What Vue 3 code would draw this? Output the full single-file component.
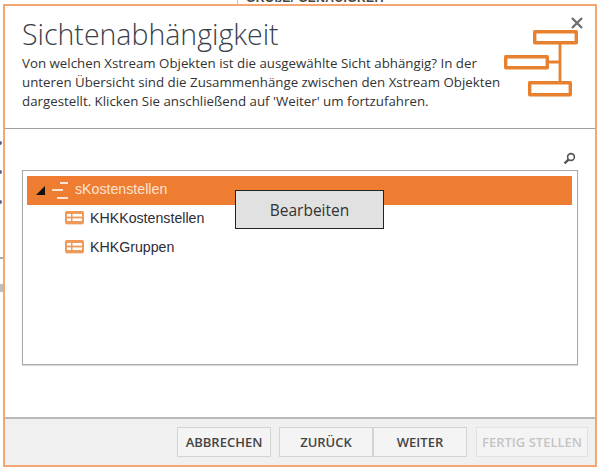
<script setup>
const rows = [
  { name: 'KHKKostenstellen' },
  { name: 'KHKGruppen' },
]
</script>

<template>
  <div class="page">
    <div class="behind">GRÖßE/ GENAUIGKEIT</div>
    <span class="mark dot dot-a"></span>
    <span class="mark dot dot-b"></span>
    <span class="mark dot dot-c"></span>
    <span class="mark tick tick-a"></span>
    <span class="mark tick tick-b"></span>
    <div class="dialog">
      <header class="head">
        <div class="head-text">
          <h1>Sichtenabhängigkeit</h1>
          <p>Von welchen Xstream Objekten ist die ausgewählte Sicht abhängig? In der unteren Übersicht sind die Zusammenhänge zwischen den Xstream Objekten dargestellt. Klicken Sie anschließend auf 'Weiter' um fortzufahren.</p>
        </div>
        <svg class="logo" width="80" height="72" viewBox="0 0 80 72" fill="none" stroke="#e8812f" stroke-width="3.4" stroke-linejoin="round">
          <rect x="31.7" y="3.7" width="41.6" height="11" />
          <rect x="2.7" y="28.7" width="41.6" height="11" />
          <rect x="26.7" y="54.7" width="40.6" height="12" />
          <path d="M57 16V53M46 34H57" stroke-width="2.8" />
        </svg>
        <svg class="close" width="12" height="12" viewBox="0 0 12 12" stroke="#6f6f6f" stroke-width="2.4">
          <path d="M1 1L11 11M11 1L1 11" />
        </svg>
      </header>
      <main class="body">
        <div class="search-row">
          <svg width="13" height="13" viewBox="0 0 13 13" fill="none" stroke="#555">
            <circle cx="8" cy="5" r="3.4" stroke-width="1.6" />
            <path d="M5.4 7.6L1.5 11.5" stroke-width="2.4" />
          </svg>
        </div>
        <div class="tree">
          <div class="root-row">
            <span class="arrow"></span>
            <svg class="root-icon" width="18" height="18" viewBox="0 0 18 18" stroke="#fbe3d0" stroke-width="2">
              <path d="M9 2H17M1 9H12M6 17H17" />
            </svg>
            <span class="root-name">sKostenstellen</span>
          </div>
          <div v-for="row in rows" :key="row.name" class="child-row">
            <svg class="table-icon" width="19" height="14" viewBox="0 0 19 14">
              <rect x="0" y="0" width="19" height="13" rx="1.5" fill="#ee9a59" />
              <rect x="2" y="3" width="4" height="2.6" fill="#fff" />
              <rect x="2" y="7.4" width="4" height="2.6" fill="#fff" />
              <rect x="7.5" y="3" width="9.5" height="2.6" fill="#fff" />
              <rect x="7.5" y="7.4" width="9.5" height="2.6" fill="#fff" />
              <rect x="1" y="13" width="17" height="1" fill="#f8d9c2" />
            </svg>
            <span>{{ row.name }}</span>
          </div>
          <div class="popup">Bearbeiten</div>
        </div>
      </main>
      <footer class="foot">
        <button class="btn cancel">ABBRECHEN</button>
        <div class="pair">
          <button class="btn nav">ZURÜCK</button>
          <button class="btn nav">WEITER</button>
        </div>
        <button class="btn finish">FERTIG STELLEN</button>
      </footer>
    </div>
  </div>
</template>

<style>
html, body { margin: 0; background: #fff; }
</style>

<style scoped>
.page {
  width: 600px;
  height: 469px;
  position: relative;
  overflow: hidden;
  background: #fff;
  padding: 4px 3px 2px 3px;
  box-sizing: border-box;
  font-family: "Open Sans", "Liberation Sans", sans-serif;
}
.behind {
  position: absolute;
  left: 237px;
  top: -9px;
  padding-left: 8px;
  border-left: 1px solid #c8c8c8;
  font: bold 12px/14px "Liberation Sans", sans-serif;
  letter-spacing: 0.4px;
  color: #444;
}
.mark { position: absolute; left: 0; }
.dot { width: 2px; height: 4px; background: #5a6288; border-radius: 0 2px 2px 0; }
.dot-a { top: 141px; }
.dot-b { top: 170px; }
.dot-c { top: 200px; }
.tick { width: 3px; background: #a9a9a9; }
.tick-a { top: 257px; height: 2px; }
.tick-b { top: 284px; height: 8px; background: #c2bdb6; }
.dialog {
  position: relative;
  height: 100%;
  box-sizing: border-box;
  border: 2px solid #f4a673;
  background: #fff;
  display: flex;
  flex-direction: column;
}
.head {
  position: relative;
  height: 123px;
  flex: none;
  box-sizing: border-box;
  border-bottom: 1px solid #a0a0a0;
  padding: 9px 0 0 17px;
}
.head-text { width: 482px; }
h1 {
  margin: 0;
  font: 300 28.5px/38px "Open Sans", sans-serif;
  color: #3a3f4a;
}
p {
  margin: 1px 0 0;
  font: 13.3px/19px "Open Sans", sans-serif;
  color: #333;
}
.logo { position: absolute; left: 498px; top: 22px; }
.close { position: absolute; left: 566px; top: 11px; }
.body {
  flex: 1;
  padding: 23px 17px 0 17px;
  box-sizing: border-box;
  min-height: 0;
}
.search-row {
  display: flex;
  justify-content: flex-end;
  height: 18px;
  padding-right: 2px;
}
.tree {
  position: relative;
  height: 195px;
  box-sizing: border-box;
  border: 1px solid #a9a9a9;
  box-shadow: 0 1px 1px #ddd;
  padding: 5px 5px 5px 4px;
}
.root-row {
  height: 29px;
  background: #ee7d32;
  display: flex;
  align-items: center;
  color: #fde3d1;
  font: 14.2px "Liberation Sans", sans-serif;
}
.root-name { padding-bottom: 3px; }
.arrow {
  width: 0;
  height: 0;
  border-left: 9px solid transparent;
  border-bottom: 9px solid #111;
  margin: 0 6px 0 9px;
}
.root-icon { margin: 0 6px 2px 0; }
.child-row {
  height: 29px;
  box-sizing: border-box;
  padding: 0 0 4px 38px;
  display: flex;
  align-items: center;
  gap: 6px;
  color: #2c2c36;
  font: 14.2px "Liberation Sans", sans-serif;
}
.table-icon { flex: none; }
.popup {
  position: absolute;
  left: 212px;
  top: 19px;
  width: 149px;
  height: 39px;
  box-sizing: border-box;
  border: 1px solid #222;
  background: #e1e1e1;
  display: flex;
  align-items: center;
  justify-content: center;
  font: 15.5px "Open Sans", sans-serif;
  color: #333;
}
.foot {
  margin-top: auto;
  height: 48px;
  flex: none;
  box-sizing: border-box;
  border-top: 2px solid #b9b9b9;
  background: #f0f0f0;
  display: flex;
  align-items: center;
  justify-content: flex-end;
  padding: 0 7px 0 0;
}
.pair { display: flex; margin: 0 9px 0 8px; }
.btn {
  height: 30px;
  box-sizing: border-box;
  border: 1px solid #d4d4d4;
  background: #f4f4f4;
  padding: 0;
  font: 600 13px "Open Sans", sans-serif;
  color: #444;
}
.cancel { width: 94px; }
.nav { width: 94px; }
.finish { width: 112px; color: #c4c4c4; border-color: #e2e2e2; }
</style>
